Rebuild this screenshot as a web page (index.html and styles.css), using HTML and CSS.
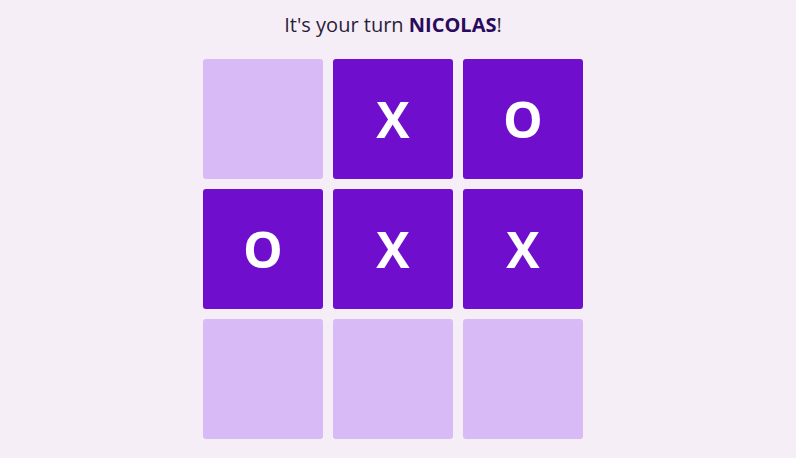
FILE: index.html
```html
<!DOCTYPE html>
<html>
<head>
<meta charset="utf-8">
<link rel="stylesheet" href="styles.css">
</head>
<body>
<main class="game">
  <p class="turn">It's your turn <strong class="player">NICOLAS</strong>!</p>
  <div class="board">
    <div class="cell empty"></div>
    <div class="cell filled">X</div>
    <div class="cell filled">O</div>
    <div class="cell filled">O</div>
    <div class="cell filled">X</div>
    <div class="cell filled">X</div>
    <div class="cell empty"></div>
    <div class="cell empty"></div>
    <div class="cell empty"></div>
  </div>
</main>
</body>
</html>
```
FILE: styles.css
```css
html, body {
  margin: 0;
  padding: 0;
  background: #f5eef6;
  font-family: "Open Sans", sans-serif;
}
.game {
  display: flex;
  flex-direction: column;
  align-items: center;
  padding-right: 10px;
  padding-top: 11px;
}
.turn {
  margin: 0 0 20px 0;
  font-size: 20px;
  line-height: 28px;
  color: #2b1d3a;
}
.player {
  font-weight: 700;
  color: #2a0a5c;
}
.board {
  display: grid;
  grid-template-columns: repeat(3, 120px);
  grid-template-rows: repeat(3, 120px);
  gap: 10px;
}
.cell {
  border-radius: 3px;
  display: flex;
  align-items: center;
  justify-content: center;
  font-size: 50px;
  font-weight: 700;
  color: #ffffff;
}
.empty {
  background: #d8bbf6;
}
.filled {
  background: #6f0ecc;
}
```
